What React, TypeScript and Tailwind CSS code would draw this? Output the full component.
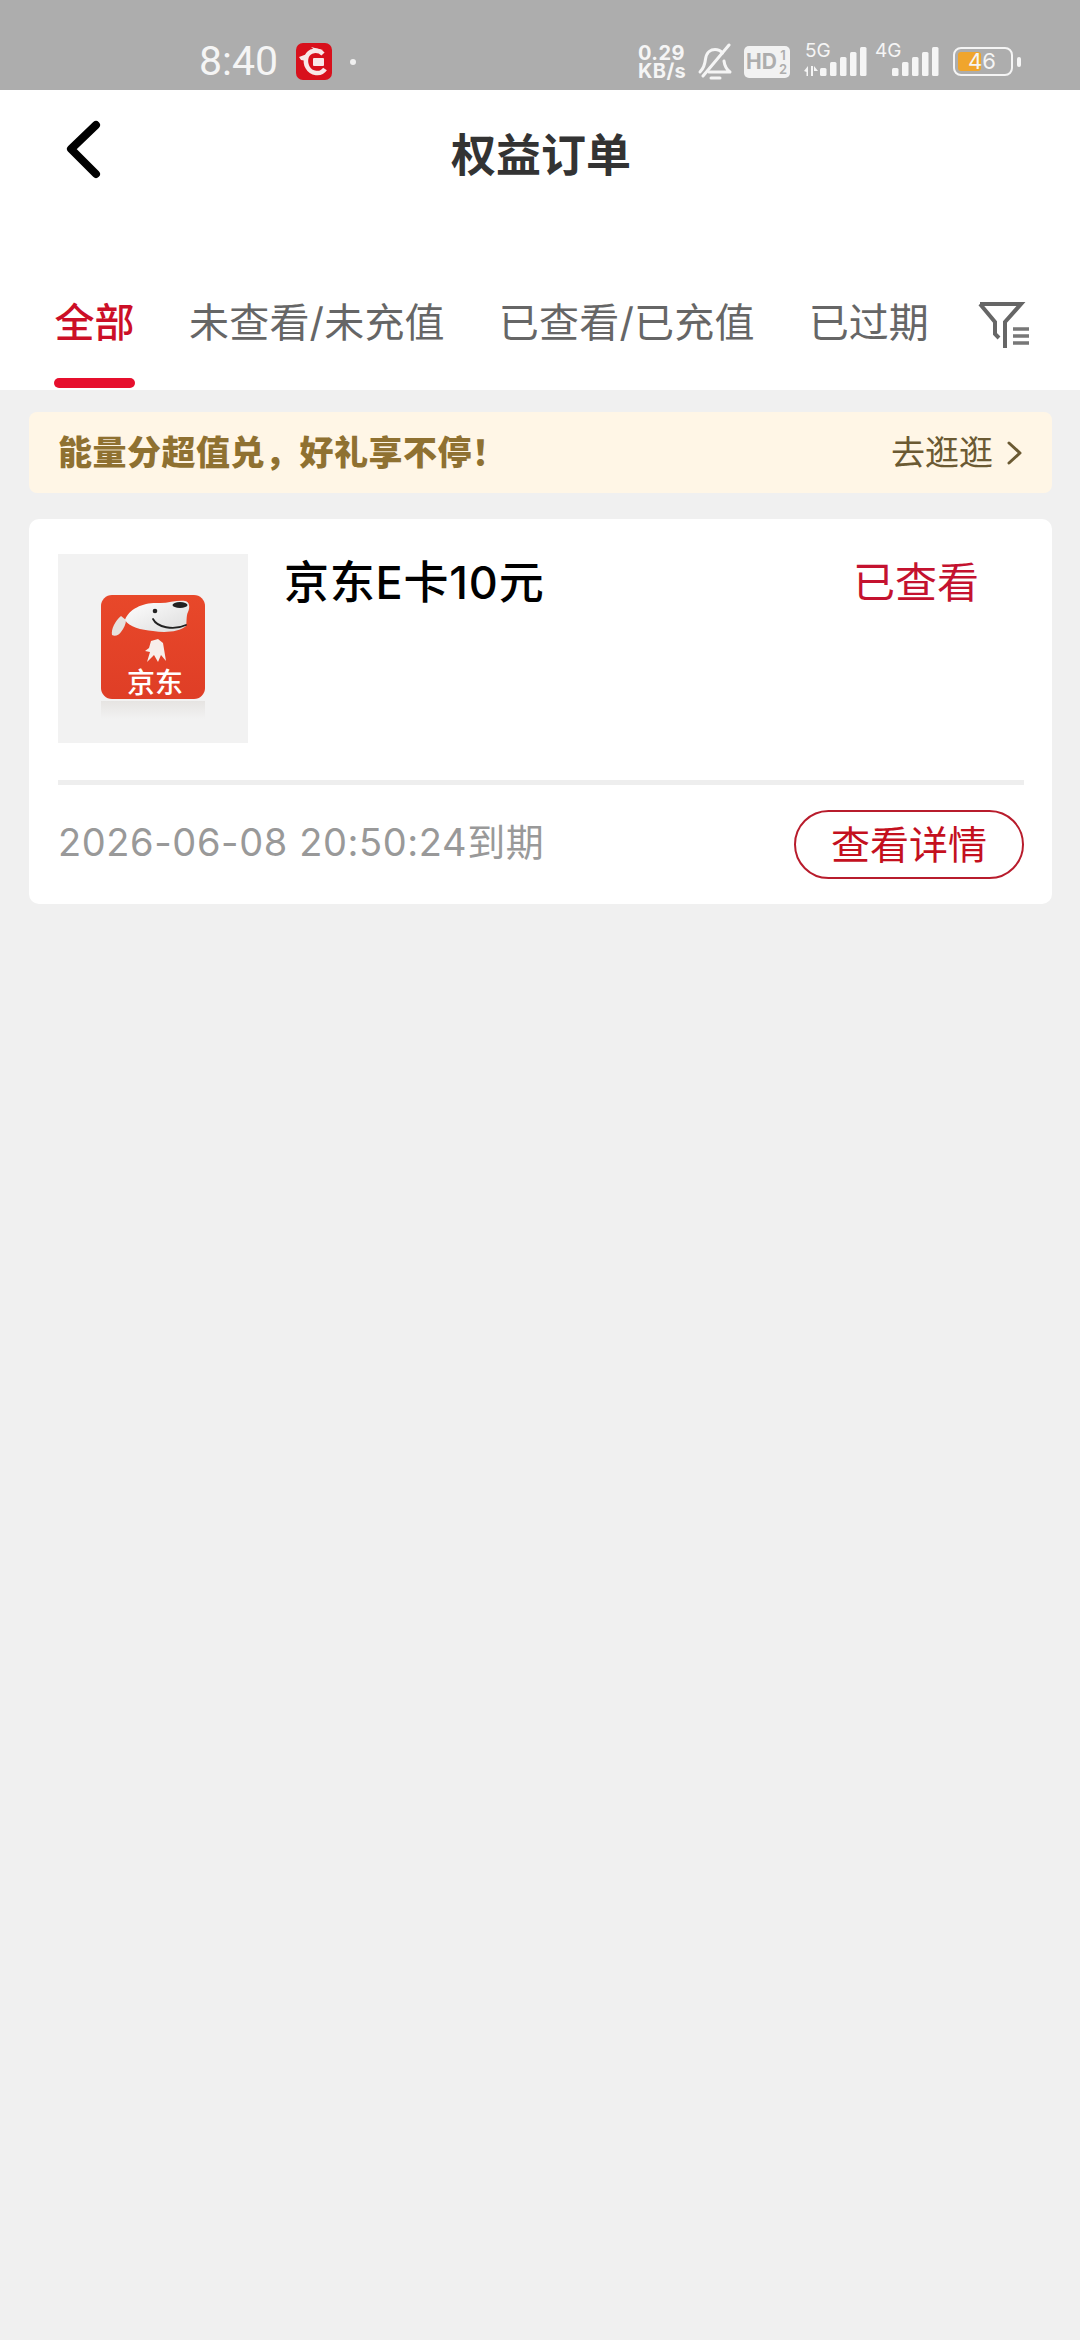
const cjk = "font-['Inter','Noto_Sans_CJK_SC',sans-serif]";

function SignalBars() {
  const heights = [8, 14, 19, 24, 29];
  return (
    <>
      {heights.map((h, i) => (
        <rect key={i} x={17 + i * 10} y={31 - h} width="6.5" height={h} rx="1.5" fill="#f5f5f5" />
      ))}
    </>
  );
}

function StatusBar() {
  return (
    <div className={`flex h-[90px] items-center bg-[#adadad] pt-[33px] text-[#f5f5f5] ${cjk}`}>
      <span className="ml-[199px] w-[78px] font-['Roboto',sans-serif] text-[41px] leading-none">8:40</span>
      {/* app badge */}
      <svg className="ml-[19px]" width="36" height="37" viewBox="0 0 36 37">
        <rect width="36" height="37" rx="7" fill="#d8101c" />
        <path d="M27 11 C22 6 13 7 10.5 14 C8.5 21 12 29 20 30 C24 30.5 27 29 29 26" fill="none" stroke="#f8e8e8" strokeWidth="4.5" />
        <path d="M3 14 L11 11 L11 18 L5 17 Z M15 4 L27 7 L22 10 Z" fill="#f8e8e8" />
        <rect x="17" y="15" width="11" height="8" rx="1" fill="#f8e8e8" />
      </svg>
      <span className="ml-[18px] h-[6px] w-[6px] rounded-full bg-[#f0f0f0]" />

      <div className="ml-[282px] flex w-[49px] flex-col text-[20px] font-bold leading-[18px] tracking-[0.4px]">
        <span>0.29</span>
        <span>KB/s</span>
      </div>
      {/* muted bell */}
      <svg className="ml-[10px]" width="36" height="38" viewBox="0 0 36 38" fill="none" stroke="#f5f5f5" strokeWidth="3" strokeLinecap="round" strokeLinejoin="round">
        <path d="M3 29 C7 25 8 21 8.5 16 C9.5 9 14 6.5 18 6.5 C21 6.5 23.5 7.5 25.5 10" />
        <path d="M27 18 C27.5 22 29 26 33 29 L12 29" />
        <path d="M14 35 L23 35" />
        <path d="M6 33 L32 2" />
      </svg>
      <div className="relative ml-[11px] flex h-[32px] w-[46px] items-center rounded-[5px] bg-[#f2f2f2] pl-[2px] text-[21px] font-bold leading-none text-[#adadad]">
        HD
        <span className="absolute right-[3px] top-[2px] flex flex-col items-center text-[13px] font-semibold leading-[14px]">
          <span>1</span>
          <span>2</span>
        </span>
      </div>
      {/* 5G signal */}
      <div className="relative ml-[13px] h-[34px] w-[66px]">
        <span className="absolute left-[2px] top-[-4px] text-[19px] leading-[20px]">5G</span>
        <svg className="absolute left-0 top-0" width="66" height="34" viewBox="0 0 66 34">
          <path d="M1 26 L5 21 V31 H3.5 V27 Z M8 21 H10 V31 H8 Z M11 21 L15 26 H11 Z" fill="#f5f5f5" />
          <SignalBars />
        </svg>
      </div>
      {/* 4G signal */}
      <div className="relative ml-[6px] h-[34px] w-[66px]">
        <span className="absolute left-0 top-[-4px] text-[19px] leading-[20px]">4G</span>
        <svg className="absolute left-0 top-0" width="66" height="34" viewBox="0 0 66 34">
          <SignalBars />
        </svg>
      </div>
      {/* battery */}
      <div className="relative ml-[12px] flex h-[29px] w-[60px] items-center rounded-[8px] border-2 border-[#f5f5f5] p-[3px]">
        <div className="h-full w-[23px] rounded-[3px] bg-[#f0a52c]" />
        <span className="absolute left-[13px] top-[0px] text-[22px] leading-[25px]">46</span>
      </div>
      <span className="ml-[4px] h-[10px] w-[4px] rounded-full bg-[#f5f5f5]" />
    </div>
  );
}

function FilterIcon() {
  return (
    <svg width="54" height="48" viewBox="0 0 54 48" fill="none" stroke="#666" strokeWidth="4">
      <path d="M3 3 H44 L28 21 V47" />
      <path d="M3 3 L18 21 V33 L22 37" />
      <path d="M36 28 H52 M36 35 H52 M36 42 H52" strokeWidth="3.5" stroke="#777" />
    </svg>
  );
}

function Header() {
  return (
    <div className={`h-[300px] bg-white ${cjk}`}>
      <div className="flex h-[130px] items-center">
        <svg className="mb-[10px] ml-[62px] shrink-0" width="44" height="66" viewBox="0 0 44 66" fill="none" stroke="#000" strokeWidth="8" strokeLinecap="round" strokeLinejoin="round">
          <path d="M34 8 L9 32 L34 57" />
        </svg>
        <h1 className="ml-[345px] text-[45px] font-bold leading-none text-[#333]">权益订单</h1>
      </div>
      <div className="flex h-[170px] pt-[45px]">
        <div className="ml-[54px] flex h-[125px] w-[81px] flex-col items-center justify-between">
          <span className="mt-[30px] text-[40px] font-medium leading-[56px] text-[#cc0f27]">全部</span>
          <span className="mb-[2px] h-[10px] w-[81px] rounded-full bg-[#e60f2d]" />
        </div>
        <span className="ml-[54px] mt-[30px] text-[40px] leading-[56px] tracking-[0.2px] text-[#666]">未查看/未充值</span>
        <span className="ml-[54px] mt-[30px] text-[40px] leading-[56px] tracking-[0.2px] text-[#666]">已查看/已充值</span>
        <span className="ml-[54px] mt-[30px] text-[40px] leading-[56px] text-[#666]">已过期</span>
        <div className="ml-[48px] mt-[36px]">
          <FilterIcon />
        </div>
      </div>
    </div>
  );
}

function JdLogo() {
  return (
    <svg width="106" height="130" viewBox="0 0 106 130">
      <defs>
        <linearGradient id="jd-bg" x1="0" y1="0" x2="0" y2="1">
          <stop offset="0" stopColor="#e8482a" />
          <stop offset="1" stopColor="#df3e26" />
        </linearGradient>
        <linearGradient id="jd-head" x1="0" y1="0" x2="1" y2="1">
          <stop offset="0" stopColor="#ffffff" />
          <stop offset="1" stopColor="#dcdcdc" />
        </linearGradient>
        <linearGradient id="jd-reflect" x1="0" y1="0" x2="0" y2="1">
          <stop offset="0" stopColor="#e6e4e2" />
          <stop offset="1" stopColor="#f2f2f2" />
        </linearGradient>
      </defs>
      <rect x="0" y="106" width="104" height="18" fill="url(#jd-reflect)" />
      <rect width="104" height="104" rx="11" fill="url(#jd-bg)" />
      {/* ear */}
      <path d="M20 21 C14 26 10 34 11 40 C14 42 18 40 20 37 C23 33 25 29 25 25 Z" fill="#e6e2de" />
      {/* head */}
      <path d="M24 25 C28 13 44 7 58 8 C66 8.5 76 5 84 6 C89 7 89 13 87 17 C85 21 86 27 85 31 C78 37 64 38 52 36 C40 35 28 32 24 25 Z" fill="url(#jd-head)" />
      {/* body and legs */}
      <path d="M50 46 L57 44 L62 48 L65 66 L60 60 L57 67 L53 60 L46 67 L49 57 L44 56 L48 53 Z" fill="#f7eeea" />
      <ellipse cx="79" cy="10" rx="7.5" ry="3" fill="#222" />
      <circle cx="54" cy="16" r="2.3" fill="#222" />
      <path d="M52 24 C56 32 72 36 85 30" fill="none" stroke="#222" strokeWidth="1.8" strokeLinecap="round" />
      <text x="54" y="98" textAnchor="middle" fontSize="28" fontFamily="'Noto Sans CJK SC', sans-serif" fill="#fff" fontWeight="500">京东</text>
    </svg>
  );
}

export default function App() {
  return (
    <div className="min-h-[2340px] bg-[#f0f0f0]">
      <StatusBar />
      <Header />
      <main className={`pl-[29px] pr-[28px] pt-[22px] ${cjk}`}>
        <div className="flex h-[81px] items-center rounded-[8px] bg-[#fff6e6] pl-[29px] pr-[30px]">
          <span className="text-[34px] font-black leading-none tracking-[0.5px] text-[#8f7131]">能量分超值兑，好礼享不停！</span>
          <span className="ml-auto text-[34px] leading-none text-[#6b5a33]">去逛逛</span>
          <svg className="ml-[14px]" width="15" height="24" viewBox="0 0 15 24" fill="none" stroke="#6b5a33" strokeWidth="3" strokeLinecap="round" strokeLinejoin="round">
            <path d="M2 2 L13 12 L2 22" />
          </svg>
        </div>

        <div className="mt-[26px] h-[385px] rounded-[10px] bg-white pl-[29px] pr-[28px]">
          <div className="flex h-[261px] pt-[35px]">
            <div className="flex h-[189px] w-[190px] justify-center bg-[#f2f2f2] pl-[2px] pt-[41px]">
              <JdLogo />
            </div>
            <div className="ml-[36px] text-[45px] font-medium leading-[58px] tracking-[0.8px] text-black">京东E卡10元</div>
            <div className="ml-auto mr-[45px] text-[42px] leading-[58px] text-[#c4122f]">已查看</div>
          </div>
          <div className="h-[5px] bg-[#eeeeee]" />
          <div className="flex h-[119px] items-start justify-between">
            <span className="mt-[32px] text-[38px] leading-[50px] tracking-[0.6px] text-[#999]">2026-06-08 20:50:24到期</span>
            <div className="mt-[25px] flex h-[69px] w-[230px] items-center justify-center rounded-full border-2 border-[#b81c2c] text-[39px] leading-none text-[#c4101e]">
              查看详情
            </div>
          </div>
        </div>
      </main>
    </div>
  );
}
